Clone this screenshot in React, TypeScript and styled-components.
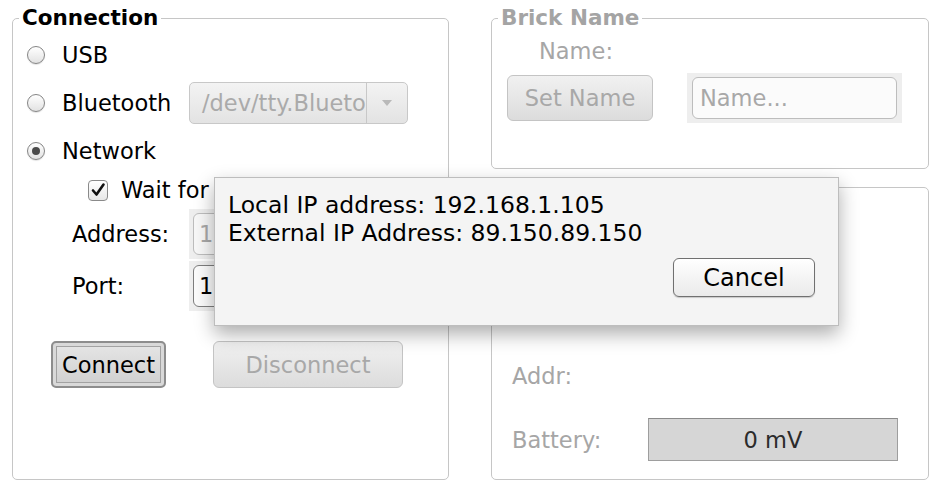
import React from 'react';
import styled, { createGlobalStyle } from 'styled-components';

const GlobalStyle = createGlobalStyle`
  html, body { margin: 0; padding: 0; background: #ffffff; }
  body { font-family: "DejaVu Sans", "Liberation Sans", sans-serif; }
`;

const Window = styled.div`
  position: relative;
  width: 945px;
  height: 499px;
  box-sizing: border-box;
  padding: 6px 0 0 12px;
  display: flex;
  align-items: flex-start;
  gap: 42px;
  font-family: "DejaVu Sans", "Liberation Sans", sans-serif;
  font-size: 22.5px;
  color: #000;
  overflow: hidden;
  background: #fff;
`;

const Column = styled.div`
  display: flex;
  flex-direction: column;
  gap: 18px;
`;

const Group = styled.fieldset<{ $w: number; $h: number }>`
  margin: 0;
  padding: 0;
  min-width: 0;
  width: ${p => p.$w}px;
  height: ${p => p.$h}px;
  box-sizing: border-box;
  border: 1px solid #c6c6c6;
  border-radius: 5px;
`;

const Legend = styled.legend<{ $muted?: boolean }>`
  margin-left: 6px;
  padding: 0 3px;
  font-weight: bold;
  font-size: 21.5px;
  line-height: 24px;
  color: ${p => (p.$muted ? '#a4a4a4' : '#000')};
`;

const Stack = styled.div`
  display: flex;
  flex-direction: column;
`;

const OptionRow = styled.div<{ $mt: number }>`
  display: flex;
  align-items: center;
  height: 42px;
  margin-top: ${p => p.$mt}px;
  padding-left: 14px;
`;

const Radio = styled.span<{ $checked?: boolean }>`
  flex: none;
  width: 18px;
  height: 18px;
  box-sizing: border-box;
  border-radius: 50%;
  border: 1px solid #858585;
  background: linear-gradient(#ffffff, #e2e2e2);
  box-shadow: 0 1px 1px rgba(0, 0, 0, 0.12);
  display: flex;
  align-items: center;
  justify-content: center;
  &::after {
    content: '';
    display: ${p => (p.$checked ? 'block' : 'none')};
    width: 8px;
    height: 8px;
    border-radius: 50%;
    background: #4a4a4a;
  }
`;

const OptionText = styled.span<{ $w?: number }>`
  margin-left: 17px;
  white-space: nowrap;
  ${p => (p.$w ? `width: ${p.$w}px; flex: none;` : '')}
`;

const Combo = styled.div`
  flex: none;
  width: 219px;
  height: 42px;
  box-sizing: border-box;
  border: 1px solid #c8c8c8;
  border-radius: 5px;
  background: linear-gradient(#f3f3f3, #e3e3e3);
  display: flex;
  overflow: hidden;
`;

const ComboText = styled.span`
  flex: 1;
  min-width: 0;
  overflow: hidden;
  white-space: nowrap;
  padding-left: 12px;
  line-height: 40px;
  color: #aaaaaa;
`;

const ComboArrow = styled.span`
  flex: none;
  width: 40px;
  border-left: 1px solid #c8c8c8;
  display: flex;
  align-items: center;
  justify-content: center;
`;

const CheckRow = styled.div`
  display: flex;
  align-items: center;
  height: 36px;
  padding-left: 75px;
`;

const CheckBox = styled.span`
  flex: none;
  width: 20px;
  height: 21px;
  box-sizing: border-box;
  border: 1px solid #8a8a8a;
  border-radius: 4px;
  background: linear-gradient(#ffffff, #e8e8e8);
  display: flex;
  align-items: center;
  justify-content: center;
`;

const CheckText = styled.span`
  margin-left: 13px;
  white-space: nowrap;
`;

const FieldRow = styled.div<{ $mt: number }>`
  display: flex;
  align-items: center;
  height: 50px;
  margin-top: ${p => p.$mt}px;
  padding-left: 59px;
`;

const FieldLabel = styled.span`
  flex: none;
  width: 117px;
`;

const FieldWell = styled.div<{ $px?: number }>`
  flex: none;
  background: #eeeeee;
  padding: 4px ${p => p.$px ?? 4}px;
`;

const TextField = styled.div<{ $w: number; $disabled?: boolean; $placeholder?: boolean }>`
  width: ${p => p.$w}px;
  height: 42px;
  box-sizing: border-box;
  border: 1px solid ${p => (p.$disabled || p.$placeholder ? '#bdbdbd' : '#7e7e7e')};
  border-radius: 6px;
  background: ${p => (p.$disabled ? '#f7f7f7' : '#fbfbfb')};
  color: ${p => (p.$disabled || p.$placeholder ? '#a8a8a8' : '#000')};
  padding-left: ${p => (p.$placeholder ? 7 : 5)}px;
  line-height: 40px;
  white-space: nowrap;
  overflow: hidden;
`;

const ButtonRow = styled.div`
  display: flex;
  align-items: center;
  gap: 47px;
  margin-top: 30px;
  padding-left: 38px;
`;

const PushButton = styled.div<{ $w: number; $h?: number; $kind: 'default' | 'disabled' | 'plain' }>`
  flex: none;
  width: ${p => p.$w}px;
  height: ${p => p.$h ?? 47}px;
  box-sizing: border-box;
  display: flex;
  align-items: center;
  justify-content: center;
  white-space: nowrap;
  border-radius: 6px;
  ${p =>
    p.$kind === 'default'
      ? `
    border: 2px solid #8d8d8d;
    border-radius: 5px;
    background: linear-gradient(#e6e6e6, #cfcfcf);
    box-shadow: inset 0 0 0 3px #d9d9d9, inset 0 0 0 4px #a2a2a2;
    color: #000;
  `
      : p.$kind === 'disabled'
      ? `
    border: 1px solid #c4c4c4;
    background: linear-gradient(#f1f1f1, #dcdcdc);
    color: #a8a8a8;
  `
      : `
    border: 1px solid #707070;
    background: linear-gradient(#ffffff, #eaeaea);
    box-shadow: 0 1px 1px rgba(0, 0, 0, 0.18);
    color: #000;
    font-size: 24px;
  `}
`;

const NameLabelRow = styled.div`
  height: 26px;
  margin-top: 8px;
  padding-left: 47px;
  display: flex;
  align-items: center;
  color: #a6a6a6;
`;

const NameRow = styled.div`
  display: flex;
  align-items: center;
  gap: 34px;
  margin-top: 9px;
  padding-left: 15px;
`;

const InfoRow = styled.div<{ $mt: number; $h: number }>`
  display: flex;
  align-items: center;
  height: ${p => p.$h}px;
  margin-top: ${p => p.$mt}px;
  padding-left: 20px;
  color: #a6a6a6;
`;

const InfoLabel = styled.span`
  flex: none;
  width: 136px;
`;

const Meter = styled.div`
  flex: none;
  width: 250px;
  height: 43px;
  box-sizing: border-box;
  border: 1px solid #9e9e9e;
  border-top-color: #8a8a8a;
  background: #d6d6d6;
  color: #2b2b2b;
  display: flex;
  align-items: center;
  justify-content: center;
`;

const Dialog = styled.div`
  position: absolute;
  left: 214px;
  top: 177px;
  width: 625px;
  height: 149px;
  box-sizing: border-box;
  border: 1px solid #bdbdbd;
  background: #f4f4f4;
  box-shadow: 0 8px 18px rgba(0, 0, 0, 0.32);
  padding: 13px 23px 0 13px;
  display: flex;
  flex-direction: column;
  font-size: 23.5px;
  line-height: 28px;
`;

const DialogLine = styled.div`
  white-space: nowrap;
`;

const DialogActions = styled.div`
  display: flex;
  justify-content: flex-end;
  margin-top: 11px;
`;

export default function App() {
  return (
    <>
      <GlobalStyle />
      <Window>
        <Group $w={437} $h={474}>
          <Legend>Connection</Legend>
          <Stack>
            <OptionRow $mt={4}>
              <Radio />
              <OptionText>USB</OptionText>
            </OptionRow>
            <OptionRow $mt={6}>
              <Radio />
              <OptionText $w={127}>Bluetooth</OptionText>
              <Combo>
                <ComboText>/dev/tty.Bluetooth-Incoming-Port</ComboText>
                <ComboArrow>
                  <svg width="12" height="8" viewBox="0 0 12 8">
                    <path d="M1 1 L11 1 L6 7 Z" fill="#b9b9b9" />
                  </svg>
                </ComboArrow>
              </Combo>
            </OptionRow>
            <OptionRow $mt={6}>
              <Radio $checked />
              <OptionText>Network</OptionText>
            </OptionRow>
            <CheckRow>
              <CheckBox>
                <svg width="16" height="16" viewBox="0 0 16 16">
                  <path d="M3 8.5 L6.5 12.5 L13.5 2.5" fill="none" stroke="#111" strokeWidth="2.6" strokeLinecap="round" strokeLinejoin="round" />
                </svg>
              </CheckBox>
              <CheckText>Wait for</CheckText>
            </CheckRow>
            <FieldRow $mt={1}>
              <FieldLabel>Address:</FieldLabel>
              <FieldWell>
                <TextField $w={200} $disabled>
                  127.0.0.1
                </TextField>
              </FieldWell>
            </FieldRow>
            <FieldRow $mt={2}>
              <FieldLabel>Port:</FieldLabel>
              <FieldWell>
                <TextField $w={200}>1500</TextField>
              </FieldWell>
            </FieldRow>
            <ButtonRow>
              <PushButton $w={115} $kind="default">
                Connect
              </PushButton>
              <PushButton $w={190} $kind="disabled">
                Disconnect
              </PushButton>
            </ButtonRow>
          </Stack>
        </Group>

        <Column>
          <Group $w={438} $h={163}>
            <Legend $muted>Brick Name</Legend>
            <Stack>
              <NameLabelRow>Name:</NameLabelRow>
              <NameRow>
                <PushButton $w={146} $h={46} $kind="disabled">
                  Set Name
                </PushButton>
                <FieldWell $px={5}>
                  <TextField $w={205} $placeholder>
                    Name...
                  </TextField>
                </FieldWell>
              </NameRow>
            </Stack>
          </Group>
          <Group $w={438} $h={293}>
            <Stack>
              <InfoRow $mt={171} $h={34}>
                <InfoLabel>Addr:</InfoLabel>
              </InfoRow>
              <InfoRow $mt={25} $h={43}>
                <InfoLabel>Battery:</InfoLabel>
                <Meter>0 mV</Meter>
              </InfoRow>
            </Stack>
          </Group>
        </Column>

        <Dialog>
          <DialogLine>Local IP address: 192.168.1.105</DialogLine>
          <DialogLine>External IP Address: 89.150.89.150</DialogLine>
          <DialogActions>
            <PushButton $w={142} $h={39} $kind="plain">
              Cancel
            </PushButton>
          </DialogActions>
        </Dialog>
      </Window>
    </>
  );
}
